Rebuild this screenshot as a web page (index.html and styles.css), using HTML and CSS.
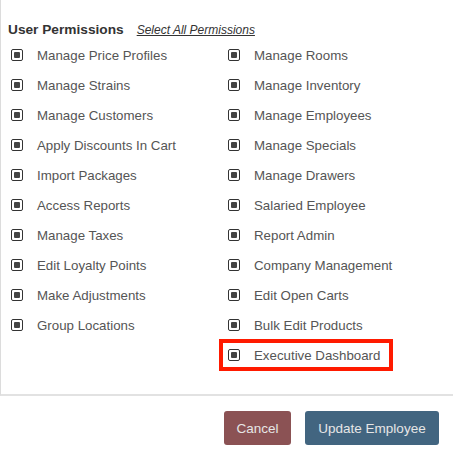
FILE: index.html
```html
<!DOCTYPE html>
<html>
<head>
<meta charset="utf-8">
<link rel="stylesheet" href="styles.css">
</head>
<body>
<div class="panel">
  <div class="header">
    <span class="title">User Permissions</span>
    <a class="select-all">Select All Permissions</a>
  </div>
  <div class="grid">
    <div class="col">
      <div class="item"><span class="cb"></span><span>Manage Price Profiles</span></div>
      <div class="item"><span class="cb"></span><span>Manage Strains</span></div>
      <div class="item"><span class="cb"></span><span>Manage Customers</span></div>
      <div class="item"><span class="cb"></span><span>Apply Discounts In Cart</span></div>
      <div class="item"><span class="cb"></span><span>Import Packages</span></div>
      <div class="item"><span class="cb"></span><span>Access Reports</span></div>
      <div class="item"><span class="cb"></span><span>Manage Taxes</span></div>
      <div class="item"><span class="cb"></span><span>Edit Loyalty Points</span></div>
      <div class="item"><span class="cb"></span><span>Make Adjustments</span></div>
      <div class="item"><span class="cb"></span><span>Group Locations</span></div>
    </div>
    <div class="col">
      <div class="item"><span class="cb"></span><span>Manage Rooms</span></div>
      <div class="item"><span class="cb"></span><span>Manage Inventory</span></div>
      <div class="item"><span class="cb"></span><span>Manage Employees</span></div>
      <div class="item"><span class="cb"></span><span>Manage Specials</span></div>
      <div class="item"><span class="cb"></span><span>Manage Drawers</span></div>
      <div class="item"><span class="cb"></span><span>Salaried Employee</span></div>
      <div class="item"><span class="cb"></span><span>Report Admin</span></div>
      <div class="item"><span class="cb"></span><span>Company Management</span></div>
      <div class="item"><span class="cb"></span><span>Edit Open Carts</span></div>
      <div class="item"><span class="cb"></span><span>Bulk Edit Products</span></div>
      <div class="item highlight"><span class="cb"></span><span>Executive Dashboard</span></div>
    </div>
  </div>
</div>
<div class="actions">
  <button class="btn cancel">Cancel</button>
  <button class="btn update">Update Employee</button>
</div>
</body>
</html>
```

FILE: styles.css
```css
html, body {
  margin: 0;
  padding: 0;
  background: #fff;
  font-family: "Liberation Sans", Arial, sans-serif;
}
.panel {
  border-left: 1px solid #dcdcdc;
  border-bottom: 2px solid #e2e2e2;
  padding: 20px 0 24px 6px;
}
.header {
  display: flex;
  align-items: baseline;
  height: 20px;
  line-height: 20px;
  padding-left: 1px;
}
.title {
  font-size: 13.7px;
  font-weight: bold;
  color: #333;
}
.select-all {
  margin-left: 13px;
  font-size: 12px;
  font-style: italic;
  text-decoration: underline;
  color: #333;
}
.grid {
  display: grid;
  grid-template-columns: 217px 1fr;
}
.item {
  display: flex;
  align-items: center;
  height: 30px;
  font-size: 13.3px;
  color: #555;
  padding-left: 4px;
  width: fit-content;
  position: relative;
  white-space: nowrap;
}
.cb {
  box-sizing: border-box;
  width: 12px;
  height: 12px;
  border: 1.5px solid #333;
  border-radius: 2px;
  background: #fff;
  margin-right: 14px;
  position: relative;
  flex: none;
}
.cb::before {
  content: "";
  position: absolute;
  left: 1.5px;
  top: 1.5px;
  width: 6px;
  height: 6px;
  border-radius: 1px;
  background: #444;
}
.highlight::after {
  content: "";
  position: absolute;
  left: -5px;
  right: -13px;
  top: -1px;
  bottom: -1px;
  border: 4px solid #ff1a00;
}
.actions {
  display: flex;
  justify-content: flex-end;
  gap: 14px;
  padding: 15px 14px 0 0;
}
.btn {
  height: 34px;
  border: none;
  border-radius: 3px;
  font-family: "Liberation Sans", Arial, sans-serif;
  font-size: 13.5px;
  color: #e6e6e6;
  padding: 0;
  white-space: nowrap;
}
.cancel {
  background: #8b5254;
  width: 67px;
}
.update {
  background: #426580;
  width: 134px;
}
```
